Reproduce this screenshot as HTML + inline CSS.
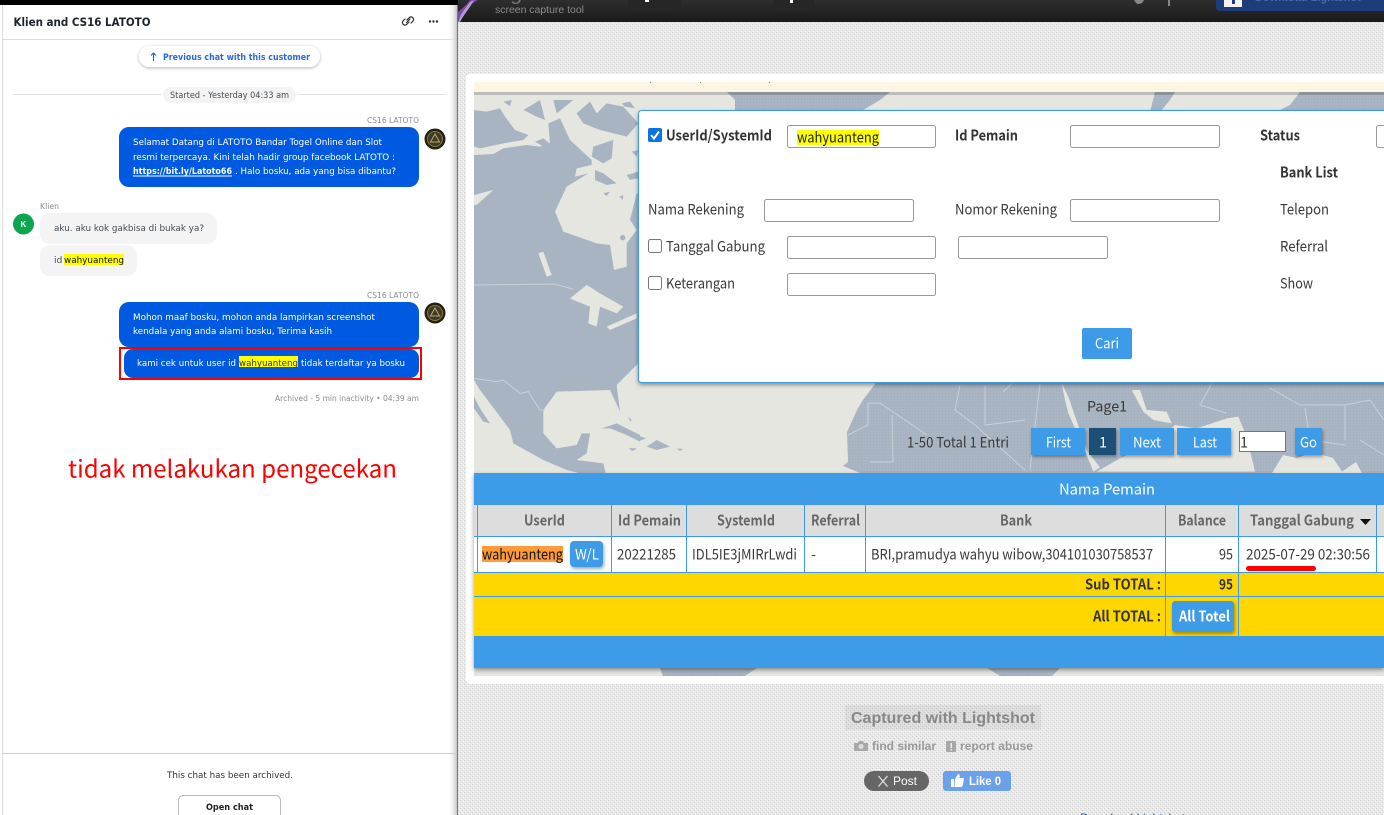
<!DOCTYPE html>
<html lang="en"><head><meta charset="utf-8"><title>Klien and CS16 LATOTO</title>
<style>
html,body{margin:0;padding:0;width:1384px;height:815px;overflow:hidden;background:#e5e5e5}
svg{display:block}
text{font-family:"Liberation Sans",sans-serif;white-space:pre}
.d,.c,.w,.g{font-family:"DejaVu Sans",sans-serif}
.c{font-size:9.2px;fill:#424d57}
.w{font-size:9.2px;fill:#fff}
.g{font-size:8px;fill:#868c94}
.r,.b,.h,.t,.n{font-family:"Noto Sans CJK SC","Liberation Sans",sans-serif;transform:translateY(.7px)}
.r{font-size:14.5px;fill:#3a3a3a}
.b{font-size:14.5px;fill:#333;font-weight:bold}
.h{font-size:14.5px;fill:#666;font-weight:bold}
.t{font-size:14.5px;fill:#fff}
.f{fill:#3c9be8}
.i{fill:#fff;stroke:#999;stroke-width:1}
.l{fill:none;stroke:#c9d0d7;stroke-width:1}
</style></head><body>
<svg width="1384" height="815" viewBox="0 0 1384 815" xmlns="http://www.w3.org/2000/svg">
<defs>
<pattern id="tx" width="4" height="4" patternUnits="userSpaceOnUse"><rect width="4" height="4" fill="#e9e9e9"/><rect x="0" y="0" width="1" height="1" fill="#d0d0d0"/><rect x="2" y="2" width="1" height="1" fill="#d0d0d0"/><rect x="1" y="3" width="1" height="1" fill="#f4f4f4"/><rect x="3" y="1" width="1" height="1" fill="#f4f4f4"/></pattern>
<pattern id="tx2" width="3" height="3" patternUnits="userSpaceOnUse"><rect width="3" height="3" fill="#a9b5c3"/><rect width="1" height="1" fill="#a1adbb"/></pattern>
<linearGradient id="bar" x1="0" y1="0" x2="0" y2="1"><stop offset="0" stop-color="#2e2e2e"/><stop offset="1" stop-color="#1a1a1a"/></linearGradient>
<linearGradient id="edge" x1="0" y1="0" x2="1" y2="0"><stop offset="0" stop-color="#fff" stop-opacity="0"/><stop offset="1" stop-color="#c4c4c4"/></linearGradient>
<filter id="s1" x="-10%" y="-30%" width="120%" height="170%"><feDropShadow dx="0" dy="1" stdDeviation="1.5" flood-color="#000" flood-opacity=".3"/></filter>
<filter id="s2" x="-5%" y="-5%" width="110%" height="110%"><feDropShadow dx="0" dy="2" stdDeviation="2" flood-color="#000" flood-opacity=".4"/></filter>
<filter id="s3" x="-20%" y="-20%" width="150%" height="150%"><feDropShadow dx="1" dy="2" stdDeviation="1.5" flood-color="#000" flood-opacity=".35"/></filter>
<clipPath id="card"><rect x="474" y="92" width="910" height="584"/></clipPath>
</defs>

<!-- page background -->
<rect x="458" y="0" width="926" height="815" fill="url(#tx)"/>
<!-- top bar -->
<rect x="458" y="0" width="926" height="22" fill="url(#bar)"/>
<path d="M458 20 C462 12 470 4 478 0 L470 0 C466 6 462 8 458 12Z" fill="#7a4bb0"/>
<path d="M458 22 C460 14 466 8 470 2 L474 0 C470 8 464 14 460 22Z" fill="#b49ad0"/>
<text x="495" y="0" font-size="19" font-style="italic" fill="#777" textLength="86" lengthAdjust="spacingAndGlyphs">Lightshot</text>
<text x="495" y="13" font-size="10" fill="#8c8c8c" textLength="89" lengthAdjust="spacingAndGlyphs">screen capture tool</text>
<rect x="628" y="0" width="54" height="11" rx="3" fill="#262626"/><rect x="645" y="0" width="4" height="2" fill="#fff"/>
<rect x="773" y="0" width="42" height="11" rx="3" fill="#262626"/><rect x="790" y="0" width="3" height="3" fill="#fff"/>
<path d="M1134 0 h10 l-2 3 q-4 2 -6 0Z" fill="#888"/><rect x="1168" y="0" width="2" height="6" fill="#888"/>
<rect x="1216" y="-6" width="180" height="17" rx="4" fill="#1d3d78"/>
<rect x="1224" y="0" width="18" height="7" fill="#f2f2f2"/><rect x="1232" y="0" width="3" height="4" fill="#1d3d78"/>
<text x="1255" y="1" font-size="11" fill="#4a6aa8" font-weight="bold">Download Lightshot</text>

<!-- white card -->
<rect x="466" y="74" width="930" height="610" rx="4" fill="#fff"/>
<rect x="474" y="82" width="910" height="10" fill="#fdf5e3"/>
<rect x="650" y="82" width="1" height="1" fill="#b08a40"/><rect x="700" y="82" width="1" height="1" fill="#b08a40"/><rect x="769" y="82" width="1" height="1" fill="#b08a40"/>

<!-- map -->
<g clip-path="url(#card)">
<rect x="474" y="92" width="910" height="584" fill="#e6e6e1"/>
<g transform="translate(460 80) scale(.33333)" fill="url(#tx2)">
<path d="M42 90L80 95 120 85 135 110 165 150 205 165 190 180 130 190 60 205 42 200Z"/>
<path d="M42 225L100 222 130 205 200 195 240 200 270 190 265 130 300 115 330 180 395 240 395 255 350 265 345 290 385 280 320 320 285 395 310 455 410 490 450 495 462 570 500 560 500 490 530 450 510 420 530 340 560 340 560 840 535 850 470 915 480 995 450 930 290 935 250 990 250 1060 290 1105 350 1095 365 1060 390 1060 380 1120 350 1140 430 1150 437 1180 360 1180 320 1170 250 1140 160 1090 150 1050 60 930 42 900Z"/>
<path d="M42 950L60 985 90 1030 70 1025 42 985Z"/>
<path d="M130 65L155 60 150 78Z"/><path d="M190 90L240 60 255 120 230 110Z"/><path d="M280 60L340 60 290 100Z"/>
<path d="M350 100L390 65 410 100 440 70 490 80 535 130 500 170 420 150 370 130Z"/>
<path d="M225 185L250 175 275 195 250 200Z"/><path d="M400 200L460 180 455 235 430 250 395 230Z"/>
<path d="M405 270L430 280 470 310 440 315 405 300Z"/><path d="M500 285L535 275 535 295 510 300Z"/>
<path d="M430 340L450 335 440 348Z"/><path d="M478 350L490 345 488 360Z"/><path d="M515 215L535 210 530 230Z"/>
<path d="M485 70L510 65 525 85 495 80Z"/>
<path d="M425 1045L470 1030 540 1065 540 1085 500 1065 450 1045Z"/><path d="M505 1010L515 1020 510 1025Z"/><path d="M505 1105L530 1105 520 1112Z"/>
</g>
<g transform="translate(460 80) scale(.33333)" fill="#e6e6e1">
<path d="M330 655L380 615 420 640 490 680 470 700 420 680 410 740 385 730 390 680 340 660Z"/>
<path d="M440 740L530 700 530 715 450 750Z"/>
<path d="M235 520L250 515 275 585 260 590Z"/><path d="M42 345L100 330 50 375 42 375Z"/>
<path d="M488 465a8 8 0 1 0 .1 0Z" fill="url(#tx2)"/>
</g>
<g transform="translate(460 80) scale(.33333)"><path class="l" d="M42 615L280 612 295 615 340 628M42 895L110 905 130 900 180 940 205 935 240 990 255 990" style="stroke-width:3"/></g>
<!-- caribbean -->
<g transform="translate(630 375) scale(.33333)" fill="#a9b5c3">
<path d="M0 170L20 180 48 190 30 197 0 185Z"/><path d="M50 215L80 195 120 215 80 225Z"/><path d="M140 220L160 222 150 228Z"/><path d="M0 218L18 222 5 228Z"/>
</g>
<!-- africa / asia -->
<path fill="url(#tx2)" d="M878 380L863 400 857 410 847 432 848 462 843 466 860 473 1384 480 1384 380Z"/>
<g transform="translate(880 380) scale(.33333)" fill="#e6e6e1">
<path d="M545 10L565 50 620 210 660 262 640 275 610 200 565 100 555 60Z"/>
<path d="M755 30L780 30 800 90 860 95 875 130 820 120 790 95Z"/>
<path d="M650 275L720 235 840 175 885 135 950 145 1040 115 1075 110 1100 170 1125 275Z"/>
</g>
<path fill="#e6e6e1" d="M1272 473L1283 455 1297 458 1313 452 1333 458 1343 473Z"/>
<path fill="#e6e6e1" d="M1340 473L1356 462 1362 473Z"/>
<g class="l"><path d="M880 403L927 435M892 415L893 462 870 462M881 403L868 403 868 425 848 435M960 385L955 410 975 425 1025 470M985 385L985 425 1025 420M1040 383L1030 470M1012 383L1003 392"/><path d="M1212 383L1200 405 1226 413M1270 388L1300 405 1345 405 1345 440M1345 405L1370 400 1384 420M1305 408L1310 440 1345 445M1360 440L1384 455"/></g>
<!-- top strip land -->
<path fill="url(#tx2)" d="M727 92H890L880 100 860 112H735L735 100Z"/><path fill="url(#tx2)" d="M1155 92H1175L1170 100 1160 112H1150Z"/>
<path fill="url(#tx2)" d="M1276 112L1290 105 1300 92H1384V112Z"/>
<path fill="url(#tx2)" d="M660 668H757L745 676H663ZM987 668H1060L1052 676H1000Z"/>
</g>
<rect x="474" y="92" width="910" height="3" fill="#000" opacity=".18"/>

<!-- search form -->
<rect x="638.5" y="110.5" width="760" height="272" rx="3" fill="#fff" stroke="#3c9be8" filter="url(#s2)"/>
<rect x="648" y="128" width="14" height="14" rx="2" fill="#0b73e0"/><path d="M651 135l3 3.500 5-7" fill="none" stroke="#fff" stroke-width="2"/>
<text class="b" x="666" y="140" textLength="106" lengthAdjust="spacingAndGlyphs">UserId/SystemId</text>
<rect class="i" x="787.500" y="125.500" width="148" height="22" rx="2"/>
<rect x="797" y="130" width="82" height="15" fill="#ff0"/>
<text class="r" x="797" y="142" style="fill:#222" textLength="82" lengthAdjust="spacingAndGlyphs">wahyuanteng</text>
<text class="b" x="955" y="140" textLength="63" lengthAdjust="spacingAndGlyphs">Id Pemain</text>
<rect class="i" x="1070.500" y="125.500" width="149" height="22" rx="2"/>
<text class="b" x="1260" y="140" textLength="40" lengthAdjust="spacingAndGlyphs">Status</text>
<rect class="i" x="1376.500" y="125.500" width="40" height="22" rx="2"/>
<text class="b" x="1280" y="177" textLength="58" lengthAdjust="spacingAndGlyphs">Bank List</text>
<text class="r" x="648" y="214" textLength="96" lengthAdjust="spacingAndGlyphs">Nama Rekening</text>
<rect class="i" x="764.500" y="199.500" width="149" height="22" rx="2"/>
<text class="r" x="955" y="214" textLength="102" lengthAdjust="spacingAndGlyphs">Nomor Rekening</text>
<rect class="i" x="1070.500" y="199.500" width="149" height="22" rx="2"/>
<text class="r" x="1280" y="214" textLength="49" lengthAdjust="spacingAndGlyphs">Telepon</text>
<rect class="i" x="648.500" y="239.500" width="13" height="13" rx="2" style="stroke:#777"/>
<text class="r" x="666" y="251" textLength="99" lengthAdjust="spacingAndGlyphs">Tanggal Gabung</text>
<rect class="i" x="787.500" y="236.500" width="148" height="22" rx="2"/>
<rect class="i" x="958.500" y="236.500" width="149" height="22" rx="2"/>
<text class="r" x="1280" y="251" textLength="48" lengthAdjust="spacingAndGlyphs">Referral</text>
<rect class="i" x="648.500" y="276.500" width="13" height="13" rx="2" style="stroke:#777"/>
<text class="r" x="666" y="288" textLength="69" lengthAdjust="spacingAndGlyphs">Keterangan</text>
<rect class="i" x="787.500" y="273.500" width="148" height="22" rx="2"/>
<text class="r" x="1280" y="288" textLength="33" lengthAdjust="spacingAndGlyphs">Show</text>
<rect class="f" x="1082" y="328" width="50" height="31" rx="2"/>
<text class="t" x="1095" y="348" textLength="24" lengthAdjust="spacingAndGlyphs">Cari</text>

<!-- pagination -->
<text class="r" x="1087" y="411" textLength="40" lengthAdjust="spacingAndGlyphs">Page1</text>
<text class="r" x="907" y="447" textLength="102" lengthAdjust="spacingAndGlyphs">1-50 Total 1 Entri</text>
<rect class="f" x="1031" y="428" width="54" height="27" filter="url(#s3)"/><text class="t" x="1046" y="447" textLength="25" lengthAdjust="spacingAndGlyphs">First</text>
<rect x="1089" y="428" width="27" height="27" fill="#1c4f74" filter="url(#s3)"/><text class="t" x="1099" y="447">1</text>
<rect class="f" x="1120" y="428" width="54" height="27" filter="url(#s3)"/><text class="t" x="1133" y="447" textLength="28" lengthAdjust="spacingAndGlyphs">Next</text>
<rect class="f" x="1177" y="428" width="54" height="27" filter="url(#s3)"/><text class="t" x="1193" y="447" textLength="24" lengthAdjust="spacingAndGlyphs">Last</text>
<rect x="1239.500" y="431.500" width="46" height="20" fill="#fff" stroke="#777"/><text class="r" x="1240" y="447">1</text>
<rect class="f" x="1295" y="428" width="27" height="27" filter="url(#s3)"/><text class="t" x="1300" y="447" textLength="17" lengthAdjust="spacingAndGlyphs">Go</text>

<!-- table -->
<rect x="474" y="473" width="910" height="195" fill="#3c9be8" filter="url(#s2)"/>
<text class="t" x="1059" y="494" style="font-size:15px" textLength="96" lengthAdjust="spacingAndGlyphs">Nama Pemain</text>
<rect x="474" y="505" width="910" height="31" fill="#ddd"/>
<rect x="474" y="537" width="910" height="35" fill="#fff"/>
<rect x="474" y="573" width="910" height="23.500" fill="#ffd700"/>
<rect x="474" y="597" width="910" height="39" fill="#ffd700"/>
<g fill="#3c9be8">
<rect x="474" y="536" width="910" height="1"/><rect x="474" y="572" width="910" height="1"/><rect x="474" y="596" width="910" height="1"/>
<rect x="477" y="505" width="1" height="67"/><rect x="611" y="505" width="1" height="67"/><rect x="686" y="505" width="1" height="67"/><rect x="804" y="505" width="1" height="67"/><rect x="865" y="505" width="1" height="67"/>
<rect x="1165" y="505" width="1" height="131"/><rect x="1238" y="505" width="1" height="131"/><rect x="1376" y="505" width="1" height="67"/>
</g>
<text class="h" x="524" y="525" textLength="41" lengthAdjust="spacingAndGlyphs">UserId</text>
<text class="h" x="618" y="525" textLength="63" lengthAdjust="spacingAndGlyphs">Id Pemain</text>
<text class="h" x="717" y="525" textLength="58" lengthAdjust="spacingAndGlyphs">SystemId</text>
<text class="h" x="811" y="525" textLength="49" lengthAdjust="spacingAndGlyphs">Referral</text>
<text class="h" x="1000" y="525" textLength="32" lengthAdjust="spacingAndGlyphs">Bank</text>
<text class="h" x="1178" y="525" textLength="48" lengthAdjust="spacingAndGlyphs">Balance</text>
<text class="h" x="1250" y="525" textLength="104" lengthAdjust="spacingAndGlyphs">Tanggal Gabung</text>
<path d="M1360 519h11l-5.500 6Z" fill="#111"/>
<rect x="482" y="546" width="81" height="16" fill="#ff9a3c"/>
<text class="r" x="482" y="559" style="fill:#111" textLength="81" lengthAdjust="spacingAndGlyphs">wahyuanteng</text>
<rect class="f" x="570" y="541" width="33" height="26" rx="4" filter="url(#s3)"/>
<text class="t" x="575" y="559" textLength="24" lengthAdjust="spacingAndGlyphs">W/L</text>
<text class="r" x="617" y="559" textLength="59" lengthAdjust="spacingAndGlyphs">20221285</text>
<text class="r" x="692" y="559" textLength="105" lengthAdjust="spacingAndGlyphs">IDL5IE3jMIRrLwdi</text>
<text class="r" x="811" y="559">-</text>
<text class="r" x="871" y="559" textLength="282" lengthAdjust="spacingAndGlyphs">BRI,pramudya wahyu wibow,304101030758537</text>
<text class="r" x="1219" y="559" textLength="14" lengthAdjust="spacingAndGlyphs">95</text>
<text class="r" x="1246" y="559" textLength="124" lengthAdjust="spacingAndGlyphs">2025-07-29 02:30:56</text>
<rect x="1246" y="566" width="70" height="5" rx="2.500" fill="#f00"/>
<text class="b" x="1085" y="589" textLength="76" lengthAdjust="spacingAndGlyphs">Sub TOTAL :</text>
<text class="b" x="1219" y="589" textLength="14" lengthAdjust="spacingAndGlyphs">95</text>
<text class="b" x="1093" y="621" textLength="68" lengthAdjust="spacingAndGlyphs">All TOTAL :</text>
<rect class="f" x="1172" y="601" width="62" height="31" rx="3" filter="url(#s3)"/>
<text class="t" x="1179" y="621" style="font-weight:bold" textLength="51" lengthAdjust="spacingAndGlyphs">All Totel</text>

<!-- footer of lightshot -->
<rect x="845" y="705" width="196" height="25" fill="#000" opacity=".05"/>
<text x="851" y="723" font-size="16" font-weight="bold" fill="#888" textLength="184" lengthAdjust="spacingAndGlyphs">Captured with Lightshot</text>
<path d="M854 743h4l1-2h4l1 2h4v8h-14Z" fill="#a8a8a8"/><circle cx="861" cy="746.500" r="2.500" fill="#ddd"/>
<text x="872" y="750" font-size="12" font-weight="bold" fill="#999" textLength="64" lengthAdjust="spacingAndGlyphs">find similar</text>
<rect x="946" y="741" width="10" height="11" rx="1" fill="#a8a8a8"/><rect x="950.500" y="743" width="1.500" height="5" fill="#eee"/><rect x="950.500" y="749" width="1.500" height="1.500" fill="#eee"/>
<text x="960" y="750" font-size="12" font-weight="bold" fill="#999" textLength="73" lengthAdjust="spacingAndGlyphs">report abuse</text>
<rect x="864" y="771" width="65" height="20" rx="10" fill="#666"/>
<path d="M878.500 776l9 10.500M887.500 776l-9 10.500" stroke="#ddd" stroke-width="1.300" fill="none"/>
<text x="893" y="785" font-size="12" fill="#fff" textLength="24" lengthAdjust="spacingAndGlyphs">Post</text>
<rect x="943" y="771" width="68" height="20" rx="3" fill="#6ba1ea"/>
<path d="M951 779h3v8h-3ZM955 779l3-5c2 0 2 2 1.500 4H963c1 0 1 1 .8 2l-1 5c-.2 1-1 2-2 2h-6.300Z" fill="#fff"/>
<text x="969" y="785" font-size="12" font-weight="bold" fill="#fff" textLength="32" lengthAdjust="spacingAndGlyphs">Like 0</text>
<text x="1080" y="822" font-size="12" fill="#1d5a9e" textLength="105" lengthAdjust="spacingAndGlyphs">Download Lightshot</text>

<!-- chat panel -->
<rect x="0" y="0" width="457" height="815" fill="#fff"/>
<rect x="448" y="0" width="9" height="815" fill="url(#edge)"/>
<rect x="457" y="0" width="1" height="815" fill="#777"/>
<rect x="2" y="5" width="1" height="810" fill="#dedede"/>
<rect x="0" y="0" width="458" height="5" fill="#000"/>
<rect x="3" y="39" width="452" height="1" fill="#ddd"/>
<text class="d" x="13.500" y="26" style="font-size:11.500px;font-weight:bold;fill:#1c232b" textLength="137" lengthAdjust="spacingAndGlyphs">Klien and CS16 LATOTO</text>
<g fill="none" stroke="#333" stroke-width="1.200" stroke-linecap="round">
<path d="M407 20l2.500-2.500a2.500 2.500 0 0 1 3.500 3.500l-2 2"/><path d="M409 22l-2.500 2.500a2.500 2.500 0 0 1-3.500-3.500l2-2"/><path d="M406.500 22.500l3.500-3.500"/>
</g>
<circle cx="430" cy="21.500" r="1.200" fill="#333"/><circle cx="433.500" cy="21.500" r="1.200" fill="#333"/><circle cx="437" cy="21.500" r="1.200" fill="#333"/>

<rect x="139" y="46" width="181" height="21" rx="10.500" fill="#fff" filter="url(#s1)"/>
<path d="M153.500 61V53M151 55.500l2.500-2.500 2.500 2.500" fill="none" stroke="#1a5fd8" stroke-width="1.100"/>
<text class="d" x="163" y="60" style="font-size:9px;fill:#2a6ad8;font-weight:bold" textLength="147" lengthAdjust="spacingAndGlyphs">Previous chat with this customer</text>

<rect x="13" y="94" width="148" height="1" fill="#e2e2e2"/><rect x="298" y="94" width="148" height="1" fill="#e2e2e2"/>
<rect x="163" y="87" width="133" height="16" rx="8" fill="#f4f4f4"/>
<text class="d" x="170" y="98" style="font-size:9px;fill:#424d57" textLength="119" lengthAdjust="spacingAndGlyphs">Started - Yesterday 04:33 am</text>

<text class="g" x="367" y="123" textLength="52" lengthAdjust="spacingAndGlyphs">CS16 LATOTO</text>
<rect x="119" y="127" width="300" height="60" rx="10" fill="#0059e1"/>
<text class="w" x="133" y="145" textLength="249" lengthAdjust="spacingAndGlyphs">Selamat Datang di LATOTO Bandar Togel Online dan Slot</text>
<text class="w" x="133" y="160" textLength="262" lengthAdjust="spacingAndGlyphs">resmi terpercaya. Kini telah hadir group facebook LATOTO :</text>
<text class="w" x="133" y="174" style="font-weight:bold" textLength="99" lengthAdjust="spacingAndGlyphs">https://bit.ly/Latoto66</text>
<rect x="133" y="175.500" width="99" height="1" fill="#fff"/>
<text class="w" x="235" y="174" textLength="161" lengthAdjust="spacingAndGlyphs">. Halo bosku, ada yang bisa dibantu?</text>
<g><circle cx="435" cy="139" r="10.500" fill="#24210f"/><circle cx="435" cy="139" r="7.500" fill="#3a3a30" stroke="#8a7a3a"/><path d="M435 134l4.500 8h-9Z" fill="none" stroke="#c9a94a"/></g>

<text class="g" x="40" y="209" textLength="19" lengthAdjust="spacingAndGlyphs">Klien</text>
<circle cx="23.500" cy="224" r="10.500" fill="#0ba64e"/>
<text x="20.500" y="227" font-size="8" font-weight="bold" fill="#fff">K</text>
<rect x="40" y="213" width="177" height="31" rx="10" fill="#f4f4f4"/>
<text class="c" x="54" y="231" textLength="150" lengthAdjust="spacingAndGlyphs">aku. aku kok gakbisa di bukak ya?</text>
<rect x="40" y="245" width="97" height="31" rx="10" fill="#f4f4f4"/>
<text class="c" x="54" y="263">id</text>
<rect x="64" y="254" width="60" height="11" fill="#ff0"/>
<text class="c" x="64" y="263" style="fill:#111" textLength="60" lengthAdjust="spacingAndGlyphs">wahyuanteng</text>

<text class="g" x="367" y="298" textLength="52" lengthAdjust="spacingAndGlyphs">CS16 LATOTO</text>
<rect x="119" y="302" width="300" height="45" rx="10" fill="#0059e1"/>
<text class="w" x="133" y="320" textLength="242" lengthAdjust="spacingAndGlyphs">Mohon maaf bosku, mohon anda lampirkan screenshot</text>
<text class="w" x="133" y="334" textLength="199" lengthAdjust="spacingAndGlyphs">kendala yang anda alami bosku, Terima kasih</text>
<g transform="translate(0 174)"><circle cx="435" cy="139" r="10.500" fill="#24210f"/><circle cx="435" cy="139" r="7.500" fill="#3a3a30" stroke="#8a7a3a"/><path d="M435 134l4.500 8h-9Z" fill="none" stroke="#c9a94a"/></g>
<rect x="124" y="349" width="295" height="29" rx="9" fill="#0059e1"/>
<rect x="120" y="348" width="301" height="31" fill="none" stroke="#f00" stroke-width="2"/>
<text class="w" x="137" y="366" textLength="99" lengthAdjust="spacingAndGlyphs">kami cek untuk user id</text>
<rect x="239" y="356" width="59" height="11" fill="#ff0"/>
<text class="c" x="239" y="366" style="fill:#333" textLength="59" lengthAdjust="spacingAndGlyphs">wahyuanteng</text>
<text class="w" x="301" y="366" textLength="104" lengthAdjust="spacingAndGlyphs">tidak terdaftar ya bosku</text>
<text class="g" x="275" y="401" textLength="144" lengthAdjust="spacingAndGlyphs">Archived - 5 min inactivity • 04:39 am</text>

<text class="n" x="68" y="477" style="font-size:24px;fill:#f00" textLength="329" lengthAdjust="spacingAndGlyphs">tidak melakukan pengecekan</text>

<rect x="3" y="753" width="453" height="1" fill="#ccc"/>
<text class="d" x="167" y="778" style="font-size:9px;fill:#333" textLength="126" lengthAdjust="spacingAndGlyphs">This chat has been archived.</text>
<rect x="178.500" y="795.500" width="102" height="30" rx="5" fill="#fff" stroke="#bbb"/>
<text class="d" x="206" y="810" style="font-size:9px;font-weight:bold;fill:#222" textLength="47" lengthAdjust="spacingAndGlyphs">Open chat</text>
</svg>
</body></html>
